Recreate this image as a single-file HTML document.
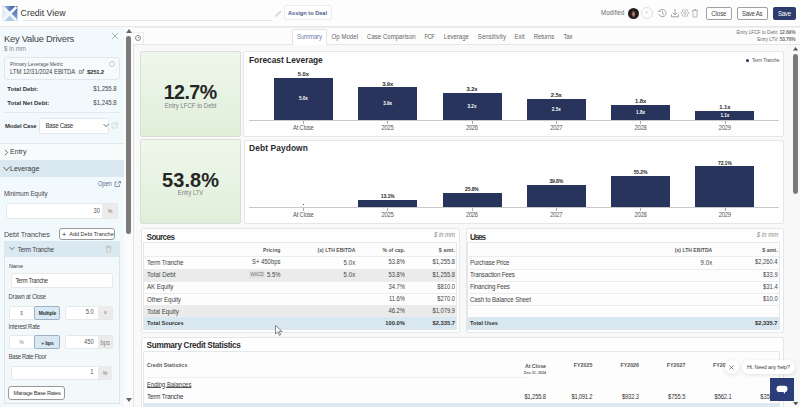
<!DOCTYPE html>
<html><head><meta charset="utf-8"><style>
html,body{margin:0;padding:0;width:800px;height:407px;overflow:hidden;background:#f9f9f9;font-family:'Liberation Sans', sans-serif;}
.a{position:absolute;}
.t{position:absolute;white-space:nowrap;line-height:1;}
.t b,.t.bd{-webkit-text-stroke:0;}
</style></head><body>
<div class="a" style="left:0px;top:0px;width:800px;height:26px;background:#fdfdfd"></div>
<div class="a" style="left:0px;top:26px;width:800px;height:1px;background:#e8e8e8"></div>
<svg class="a" style="left:2.2px;top:5.5px" width="15.4" height="15.4" viewBox="0 0 15 15">
<defs><linearGradient id="lt" x1="0" y1="0" x2="1" y2="0"><stop offset="0" stop-color="#b9d0ea"/><stop offset="0.5" stop-color="#5d82bd"/><stop offset="1" stop-color="#2c4786"/></linearGradient>
<linearGradient id="lr" x1="0" y1="0" x2="0" y2="1"><stop offset="0" stop-color="#3e62a3"/><stop offset="1" stop-color="#8fb2dc"/></linearGradient></defs>
<path d="M0 0 L7.5 7.5 L0 15Z" fill="#e3edf6"/>
<path d="M0 0 L15 0 L7.5 7.5Z" fill="url(#lt)"/>
<path d="M15 0 L15 15 L7.5 7.5Z" fill="url(#lr)"/>
<path d="M0 15 L15 15 L7.5 7.5Z" fill="#b3cde8"/>
<path d="M1 1 L14 14 M14 1 L1 14" stroke="#f4f8fc" stroke-width="2.6"/>
</svg>
<div class="t" style="top:8.78px;font-size:8.8px;color:#333;letter-spacing:0.017px;left:20.6px;">Credit View</div>
<div class="a" style="left:23px;top:20px;width:249px;height:1px;background:#e0e8ee"></div>
<svg class="a" style="left:274px;top:9px" width="9" height="9" viewBox="0 0 9 9"><path d="M1.5 7.5 L7 2" stroke="#cfcfcf" stroke-width="1.4"/></svg>
<div class="a" style="left:283.5px;top:5px;width:48px;height:15px;border:1px solid #e9edf1;border-radius:2px;box-sizing:border-box;background:#fdfdfd"></div>
<div class="t" style="top:10.61px;font-size:5.6px;color:#4d5c8c;font-weight:bold;-webkit-text-stroke:0;letter-spacing:0.008px;left:207.50px;width:200px;text-align:center;">Assign to Deal</div>
<div class="t" style="top:9.90px;font-size:6.1px;color:#6a6a6a;letter-spacing:0.049px;transform:scaleY(1.1);transform-origin:0 5.00px;left:601px;">Modified</div>
<div class="a" style="left:628px;top:7.5px;width:11px;height:11px;border-radius:50%;background:radial-gradient(ellipse 2.2px 3.6px at 50% 55%,#c79a8c 0,#8a5c52 60%,#241c1c 100%)"></div>
<div class="a" style="left:640.5px;top:7px;width:12px;height:12px;border-radius:50%;border:1px solid #e0e0e0;box-sizing:border-box"></div>
<div class="t" style="top:10.07px;font-size:6.5px;color:#cfcfcf;left:546.60px;width:200px;text-align:center;">+</div>
<svg class="a" style="left:657px;top:8px" width="10" height="10" viewBox="0 0 10 10"><path d="M2.2 3.5 A3.6 3.6 0 1 1 2 6" fill="none" stroke="#9a9a9a" stroke-width="0.9"/><path d="M1 2.5 L2.4 4 L3.8 2.6" fill="none" stroke="#9a9a9a" stroke-width="0.9"/><path d="M5.5 3 V5.5 L7 6.5" fill="none" stroke="#9a9a9a" stroke-width="0.9"/></svg>
<svg class="a" style="left:670px;top:8px" width="10" height="10" viewBox="0 0 10 10"><path d="M5 1 V7 M2.8 4.8 L5 7 L7.2 4.8 M1.5 6.5 V8.8 H8.5 V6.5" fill="none" stroke="#9a9a9a" stroke-width="0.9"/></svg>
<svg class="a" style="left:679.8px;top:7.8px" width="10" height="10" viewBox="0 0 10 10"><path d="M8.87 4.49 L8.87 5.51 L7.77 6.15 L7.38 6.83 L7.37 8.09 L6.49 8.60 L5.39 7.97 L4.61 7.97 L3.51 8.60 L2.63 8.09 L2.62 6.83 L2.23 6.15 L1.13 5.51 L1.13 4.49 L2.23 3.85 L2.62 3.17 L2.63 1.91 L3.51 1.40 L4.61 2.03 L5.39 2.03 L6.49 1.40 L7.37 1.91 L7.38 3.17 L7.77 3.85Z" fill="none" stroke="#a8a8a8" stroke-width="0.75" stroke-linejoin="round"/><circle cx="5" cy="5" r="1.3" fill="none" stroke="#a8a8a8" stroke-width="0.75"/></svg>
<svg class="a" style="left:691px;top:8px" width="8" height="10" viewBox="0 0 8 10"><path d="M1 2.5 H7 M3 2.5 V1.5 H5 V2.5 M1.7 2.5 L2.2 9 H5.8 L6.3 2.5" fill="none" stroke="#b0b0b0" stroke-width="0.9"/></svg>
<div class="a" style="left:706px;top:7px;width:25.5px;height:12.5px;border:1px solid #a0a0a0;border-radius:2px;box-sizing:border-box;background:#fff"></div>
<div class="t" style="top:11.00px;font-size:6.1px;color:#444;letter-spacing:-0.099px;transform:scaleY(1.1);transform-origin:0 5.00px;left:618.85px;width:200px;text-align:center;">Close</div>
<div class="a" style="left:737px;top:7px;width:30.7px;height:12.5px;border:1px solid #a0a0a0;border-radius:2px;box-sizing:border-box;background:#fff"></div>
<div class="t" style="top:11.00px;font-size:6.1px;color:#444;letter-spacing:-0.297px;transform:scaleY(1.1);transform-origin:0 5.00px;left:652.15px;width:200px;text-align:center;">Save As</div>
<div class="a" style="left:773px;top:7px;width:22.5px;height:12.5px;border-radius:2px;background:#2d3b6d"></div>
<div class="t" style="top:11.00px;font-size:6.1px;color:#fff;letter-spacing:-0.268px;transform:scaleY(1.1);transform-origin:0 5.00px;left:684.37px;width:200px;text-align:center;">Save</div>
<div class="a" style="left:0px;top:27px;width:124px;height:380px;background:#f2f9fc"></div>
<div class="t" style="top:33.69px;font-size:9.4px;color:#444;letter-spacing:-0.258px;left:4px;">Key Value Drivers</div>
<svg class="a" style="left:111px;top:32px" width="8" height="8" viewBox="0 0 8 8"><path d="M1 1 L7 7 M7 1 L1 7" stroke="#999" stroke-width="0.8"/></svg>
<div class="t" style="top:46.12px;font-size:6.2px;color:#888;transform:scaleY(1.1);transform-origin:0 5.08px;left:4px;">$ in mm</div>
<div class="a" style="left:4px;top:57px;width:116px;height:22.5px;border:1px solid #e0e7ec;border-radius:3px;box-sizing:border-box;background:#f6fafc"></div>
<div class="t" style="top:61.90px;font-size:5.0px;color:#555;letter-spacing:-0.066px;transform:scaleY(1.1);transform-origin:0 4.10px;left:10px;">Primary Leverage Metric</div>
<div class="t" style="top:69.08px;font-size:6.0px;color:#444;letter-spacing:-0.064px;transform:scaleY(1.1);transform-origin:0 4.92px;left:10px;">LTM 12/31/2024 EBITDA</div>
<div class="t" style="top:69.08px;font-size:6.0px;color:#444;font-style:italic;letter-spacing:0.197px;transform:scaleY(1.1);transform-origin:0 4.92px;left:78.5px;">of</div>
<div class="t" style="top:69.08px;font-size:6.0px;color:#333;font-weight:bold;-webkit-text-stroke:0;letter-spacing:-0.23px;left:87px;">$251.2</div>
<div class="a" style="left:109px;top:61px;width:6px;height:6px;border-radius:50%;border:0.8px solid #ccc;box-sizing:border-box"></div>
<div class="t" style="top:86.08px;font-size:6px;color:#333;font-weight:bold;-webkit-text-stroke:0;letter-spacing:-0.028px;left:7.3px;">Total Debt:</div>
<div class="t" style="top:86.08px;font-size:6px;color:#444;transform:scaleY(1.1);transform-origin:0 4.92px;right:683.30px;">$1,255.8</div>
<div class="t" style="top:100.28px;font-size:6px;color:#333;font-weight:bold;-webkit-text-stroke:0;letter-spacing:-0.015px;left:7.3px;">Total Net Debt:</div>
<div class="t" style="top:100.28px;font-size:6px;color:#444;transform:scaleY(1.1);transform-origin:0 4.92px;right:683.30px;">$1,245.8</div>
<div class="a" style="left:4px;top:112px;width:116px;height:1px;background:#e3e9ed"></div>
<div class="t" style="top:123.56px;font-size:5.9px;color:#333;font-weight:bold;-webkit-text-stroke:0;letter-spacing:-0.121px;left:5px;">Model Case</div>
<div class="a" style="left:39.3px;top:117.7px;width:70px;height:16.8px;border:1px solid #e3e8ec;border-radius:2px;box-sizing:border-box;background:#fff"></div>
<div class="t" style="top:123.32px;font-size:6.2px;color:#333;letter-spacing:-0.328px;transform:scaleY(1.1);transform-origin:0 5.08px;left:45.5px;">Base Case</div>
<svg class="a" style="left:102.5px;top:123px" width="6" height="5" viewBox="0 0 6 5"><path d="M0.6 1.2 L3 3.6 L5.4 1.2" fill="none" stroke="#444" stroke-width="0.8"/></svg>
<svg class="a" style="left:111px;top:121px" width="8" height="8" viewBox="0 0 8 8"><rect x="1" y="2" width="5" height="5" fill="none" stroke="#ccc" stroke-width="0.7"/><path d="M3 5 L7 1" stroke="#ccc" stroke-width="0.8"/></svg>
<div class="a" style="left:0px;top:143px;width:124px;height:1px;background:#e3e9ed"></div>
<div class="a" style="left:0px;top:144px;width:124px;height:15.5px;background:#f8fbfc"></div>
<svg class="a" style="left:4px;top:148.5px" width="5" height="7" viewBox="0 0 5 7"><path d="M1 0.8 L3.6 3.5 L1 6.2" fill="none" stroke="#444" stroke-width="0.8"/></svg>
<div class="t" style="top:149.38px;font-size:7.1px;color:#3a3a3a;letter-spacing:-0.018px;transform:scaleY(1.1);transform-origin:0 5.82px;left:10px;">Entry</div>
<div class="a" style="left:0px;top:159.5px;width:124px;height:1px;background:#e3e9ed"></div>
<div class="a" style="left:0px;top:160.4px;width:124px;height:16.2px;background:#d9e8f1"></div>
<svg class="a" style="left:3.3px;top:165.5px" width="7" height="6" viewBox="0 0 7 6"><path d="M0.6 1 L3.5 4.6 L6.4 1" fill="none" stroke="#444" stroke-width="0.8"/></svg>
<div class="t" style="top:165.98px;font-size:7.1px;color:#3a3a3a;letter-spacing:-0.029px;transform:scaleY(1.1);transform-origin:0 5.82px;left:10px;">Leverage</div>
<div class="t" style="top:181.74px;font-size:5.8px;color:#5b6b8e;letter-spacing:-0.162px;transform:scaleY(1.1);transform-origin:0 4.76px;left:98px;">Open</div>
<svg class="a" style="left:113.5px;top:181px" width="7" height="6" viewBox="0 0 7 6"><path d="M3 1 H1 V5.5 H5.5 V3.5 M3.5 3 L6.5 0.5 M4.5 0.5 H6.5 V2.5" fill="none" stroke="#5b6b8e" stroke-width="0.7"/></svg>
<div class="t" style="top:190.82px;font-size:6.2px;color:#444;letter-spacing:-0.038px;transform:scaleY(1.1);transform-origin:0 5.08px;left:4px;">Minimum Equity</div>
<div class="a" style="left:5.5px;top:203px;width:112.2px;height:15.5px;border:1px solid #e6e9ec;border-radius:2px;box-sizing:border-box;background:#fff"></div>
<div class="a" style="left:102.2px;top:203.5px;width:15px;height:14.5px;background:#ebebeb"></div>
<div class="t" style="top:209.14px;font-size:5.8px;color:#555;transform:scaleY(1.1);transform-origin:0 4.76px;right:700.00px;">30</div>
<div class="t" style="top:208.94px;font-size:5.2px;color:#777;transform:scaleY(1.1);transform-origin:0 4.26px;left:10.00px;width:200px;text-align:center;">%</div>
<div class="t" style="top:231.00px;font-size:7.2px;color:#4a4a4a;letter-spacing:-0.077px;transform:scaleY(1.1);transform-origin:0 5.90px;left:4px;">Debt Tranches</div>
<div class="a" style="left:58.7px;top:227.5px;width:56.5px;height:12.2px;border:1px solid #9a9a9a;border-radius:3px;box-sizing:border-box;background:#fff"></div>
<div class="t" style="top:231.65px;font-size:5.55px;color:#333;letter-spacing:-0.009px;transform:scaleY(1.1);transform-origin:0 4.55px;left:69.2px;">Add Debt Tranche</div>
<div class="t" style="top:231.04px;font-size:8px;color:#444;left:-35.80px;width:200px;text-align:center;">+</div>
<div class="a" style="left:4px;top:240.7px;width:115.7px;height:163.8px;border:1px solid #dbe4ea;box-sizing:border-box;background:#f3f8fb"></div>
<div class="a" style="left:4px;top:240.5px;width:115.7px;height:16.8px;background:#dae8f1"></div>
<svg class="a" style="left:8.5px;top:246px" width="6" height="5" viewBox="0 0 6 5"><path d="M0.6 1.2 L3 3.6 L5.4 1.2" fill="none" stroke="#555" stroke-width="0.8"/></svg>
<div class="t" style="top:246.83px;font-size:6.3px;color:#444;letter-spacing:-0.192px;transform:scaleY(1.1);transform-origin:0 5.17px;left:17.7px;">Term Tranche</div>
<svg class="a" style="left:105.3px;top:244.8px" width="7" height="8" viewBox="0 0 7 8"><path d="M0.6 1.8 H6.4 M2.5 1.8 V0.8 H4.5 V1.8" fill="none" stroke="#c2c2c2" stroke-width="0.8"/><path d="M1.3 2.3 L1.7 7.3 Q1.8 7.6 2.1 7.6 H4.9 Q5.2 7.6 5.3 7.3 L5.7 2.3 Z" fill="#d8dcdf" stroke="#c2c2c2" stroke-width="0.7"/><path d="M2.8 3.3 V6.6 M4.2 3.3 V6.6" stroke="#eef2f4" stroke-width="0.5"/></svg>
<div class="t" style="top:263.61px;font-size:5.6px;color:#444;letter-spacing:-0.279px;transform:scaleY(1.1);transform-origin:0 4.59px;left:9px;">Name</div>
<div class="a" style="left:10.8px;top:273.4px;width:102px;height:15px;border:1px solid #e6e9ec;border-radius:2px;box-sizing:border-box;background:#fff"></div>
<div class="t" style="top:278.84px;font-size:5.8px;color:#333;letter-spacing:-0.259px;transform:scaleY(1.1);transform-origin:0 4.76px;left:15.4px;">Term Tranche</div>
<div class="t" style="top:294.94px;font-size:5.8px;color:#444;letter-spacing:-0.165px;transform:scaleY(1.1);transform-origin:0 4.76px;left:8.6px;">Drawn at Close</div>
<div class="a" style="left:8.6px;top:305.5px;width:26px;height:14.1px;border:1px solid #e6e9ec;border-right:none;box-sizing:border-box;background:#fff;border-radius:2px 0 0 2px"></div>
<div class="a" style="left:34.2px;top:305.5px;width:26.3px;height:14.1px;border:1px solid #9db3c4;box-sizing:border-box;background:#d9e9f3;border-radius:2px"></div>
<div class="t" style="top:310.57px;font-size:5.4px;color:#888;transform:scaleY(1.1);transform-origin:0 4.43px;left:-78.50px;width:200px;text-align:center;">$</div>
<div class="t" style="top:310.90px;font-size:5.0px;color:#333;font-weight:bold;-webkit-text-stroke:0;letter-spacing:-0.169px;left:-52.58px;width:200px;text-align:center;">Multiple</div>
<div class="a" style="left:65.3px;top:305.5px;width:47.3px;height:14.1px;border:1px solid #e6e9ec;border-radius:2px;box-sizing:border-box;background:#fff"></div>
<div class="a" style="left:98.4px;top:306px;width:13.8px;height:13.1px;background:#ebebeb"></div>
<div class="t" style="top:310.24px;font-size:5.8px;color:#555;transform:scaleY(1.1);transform-origin:0 4.76px;right:706.30px;">5.0</div>
<div class="t" style="top:310.49px;font-size:5.5px;color:#777;transform:scaleY(1.1);transform-origin:0 4.51px;left:5.30px;width:200px;text-align:center;">x</div>
<div class="t" style="top:325.04px;font-size:5.8px;color:#444;letter-spacing:-0.159px;transform:scaleY(1.1);transform-origin:0 4.76px;left:8.6px;">Interest Rate</div>
<div class="a" style="left:8.6px;top:335px;width:26px;height:14.3px;border:1px solid #e6e9ec;border-right:none;box-sizing:border-box;background:#fff;border-radius:2px 0 0 2px"></div>
<div class="a" style="left:34.2px;top:335px;width:26.3px;height:14.3px;border:1px solid #9db3c4;box-sizing:border-box;background:#d9e9f3;border-radius:2px"></div>
<div class="t" style="top:340.24px;font-size:5.2px;color:#888;transform:scaleY(1.1);transform-origin:0 4.26px;left:-78.50px;width:200px;text-align:center;">%</div>
<div class="t" style="top:340.50px;font-size:5.0px;color:#333;font-weight:bold;-webkit-text-stroke:0;letter-spacing:-0.199px;left:-52.60px;width:200px;text-align:center;">+ bps</div>
<div class="a" style="left:65.3px;top:335px;width:47.3px;height:14.3px;border:1px solid #e6e9ec;border-radius:2px;box-sizing:border-box;background:#fff"></div>
<div class="a" style="left:98.4px;top:335.5px;width:13.8px;height:13.3px;background:#ebebeb"></div>
<div class="t" style="top:339.74px;font-size:5.8px;color:#555;transform:scaleY(1.1);transform-origin:0 4.76px;right:706.30px;">450</div>
<div class="t" style="top:339.88px;font-size:6.0px;color:#888;letter-spacing:-0.137px;transform:scaleY(1.1);transform-origin:0 4.92px;left:5.23px;width:200px;text-align:center;">bps</div>
<div class="t" style="top:355.14px;font-size:5.8px;color:#444;letter-spacing:-0.308px;transform:scaleY(1.1);transform-origin:0 4.76px;left:8.8px;">Base Rate Floor</div>
<div class="a" style="left:11px;top:365.6px;width:101.2px;height:14px;border:1px solid #e6e9ec;border-radius:2px;box-sizing:border-box;background:#fff"></div>
<div class="a" style="left:97.9px;top:366px;width:14px;height:13.2px;background:#ebebeb"></div>
<div class="t" style="top:370.24px;font-size:5.8px;color:#555;transform:scaleY(1.1);transform-origin:0 4.76px;right:706.50px;">1</div>
<div class="t" style="top:370.74px;font-size:5.2px;color:#777;transform:scaleY(1.1);transform-origin:0 4.26px;left:5.00px;width:200px;text-align:center;">%</div>
<div class="a" style="left:8.4px;top:386.3px;width:57.1px;height:14px;border:1px solid #999;border-radius:3px;box-sizing:border-box;background:#fff"></div>
<div class="t" style="top:391.01px;font-size:5.6px;color:#333;letter-spacing:-0.221px;transform:scaleY(1.1);transform-origin:0 4.59px;left:-63.01px;width:200px;text-align:center;">Manage Base Rates</div>
<div class="a" style="left:124px;top:27px;width:9px;height:380px;background:#fbfbfb"></div>
<svg class="a" style="left:125.5px;top:29px" width="6" height="4" viewBox="0 0 6 4"><path d="M0 4 L3 0 L6 4Z" fill="#666"/></svg>
<div class="a" style="left:126px;top:36.4px;width:4.6px;height:197.3px;background:#7b7b7b;border-radius:2.3px"></div>
<svg class="a" style="left:125.5px;top:398px" width="6" height="4" viewBox="0 0 6 4"><path d="M0 0 L3 4 L6 0Z" fill="#666"/></svg>
<div class="a" style="left:132.5px;top:44px;width:1px;height:363px;background:#e4e4e4"></div>
<div class="a" style="left:134px;top:27px;width:666px;height:380px;background:#f9f9f9"></div>
<div class="a" style="left:132.5px;top:27px;width:667.5px;height:17px;background:#fcfcfc"></div>
<div class="a" style="left:132.5px;top:27.3px;width:667.5px;height:0.8px;background:#eeeeee"></div>
<div class="a" style="left:132.5px;top:43.6px;width:667.5px;height:1px;background:#e6e6e6"></div>
<div class="a" style="left:132.4px;top:31.8px;width:11.6px;height:12px;background:#fdfdfd;border-right:1px solid #e6e6e6;border-top:1px solid #ececec;box-sizing:border-box"></div>
<div class="a" style="left:135px;top:34.5px;width:6.2px;height:6.2px;border-radius:50%;border:0.9px solid #8a8a8a;box-sizing:border-box"></div>
<div class="a" style="left:137.5px;top:37px;width:1.2px;height:1.2px;background:#777"></div>
<div class="a" style="left:292.3px;top:29.3px;width:35.2px;height:15.7px;background:#fff;border:1px solid #e3e3e3;border-bottom:none;box-sizing:border-box;border-radius:2px 2px 0 0"></div>
<div class="t" style="top:34.38px;font-size:6.0px;color:#6a7db0;letter-spacing:-0.111px;transform:scaleY(1.1);transform-origin:0 4.92px;left:297px;">Summary</div>
<div class="t" style="top:34.38px;font-size:6.0px;color:#666;letter-spacing:0.07px;transform:scaleY(1.1);transform-origin:0 4.92px;left:331.5px;">Op Model</div>
<div class="t" style="top:34.38px;font-size:6.0px;color:#666;letter-spacing:0.042px;transform:scaleY(1.1);transform-origin:0 4.92px;left:367px;">Case Comparison</div>
<div class="t" style="top:34.38px;font-size:6.0px;color:#666;letter-spacing:-0.581px;transform:scaleY(1.1);transform-origin:0 4.92px;left:424.5px;">FCF</div>
<div class="t" style="top:34.38px;font-size:6.0px;color:#666;letter-spacing:0.012px;transform:scaleY(1.1);transform-origin:0 4.92px;left:443.8px;">Leverage</div>
<div class="t" style="top:34.38px;font-size:6.0px;color:#666;letter-spacing:0.109px;transform:scaleY(1.1);transform-origin:0 4.92px;left:477.8px;">Sensitivity</div>
<div class="t" style="top:34.38px;font-size:6.0px;color:#666;letter-spacing:-0.001px;transform:scaleY(1.1);transform-origin:0 4.92px;left:514.6px;">Exit</div>
<div class="t" style="top:34.38px;font-size:6.0px;color:#666;letter-spacing:-0.068px;transform:scaleY(1.1);transform-origin:0 4.92px;left:533.7px;">Returns</div>
<div class="t" style="top:34.38px;font-size:6.0px;color:#666;letter-spacing:-0.168px;transform:scaleY(1.1);transform-origin:0 4.92px;left:563.4px;">Tax</div>
<div class="t" style="top:30.58px;font-size:4.9px;color:#707070;letter-spacing:-0.09px;transform:scaleY(1.1);transform-origin:0 4.02px;right:4.49px;">Entry LFCF to Debt: <b>12.69%</b></div>
<div class="t" style="top:37.58px;font-size:4.9px;color:#707070;letter-spacing:-0.13px;transform:scaleY(1.1);transform-origin:0 4.02px;right:4.53px;">Entry LTV: <b>53.76%</b></div>
<div class="a" style="left:792px;top:45px;width:8px;height:362px;background:#f8f8f8"></div>
<svg class="a" style="left:793.1px;top:47px" width="5.2" height="3.7" viewBox="0 0 6 4"><path d="M0 4 L3 0 L6 4Z" fill="#555"/></svg>
<div class="a" style="left:793.3px;top:54.4px;width:4.8px;height:139.6px;background:#787878;border-radius:2.4px"></div>
<svg class="a" style="left:793px;top:401.5px" width="5.5" height="3.5" viewBox="0 0 6 4"><path d="M0 0 L3 4 L6 0Z" fill="#555"/></svg>
<div class="a" style="left:140px;top:51.4px;width:101px;height:85.6px;background:linear-gradient(#eef7eb,#e0efda);border:1px solid #d9dfd8;box-sizing:border-box;border-radius:2px"></div>
<div class="t" style="top:83.03px;font-size:19.6px;color:#262626;font-weight:bold;-webkit-text-stroke:0;letter-spacing:-0.55px;left:90.12px;width:200px;text-align:center;">12.7%</div>
<div class="t" style="top:103.28px;font-size:6.0px;color:#808080;transform:scaleY(1.1);transform-origin:0 4.92px;left:90.70px;width:200px;text-align:center;">Entry LFCF to Debt</div>
<div class="a" style="left:140px;top:139.3px;width:101px;height:85.1px;background:linear-gradient(#eef7eb,#e0efda);border:1px solid #d9dfd8;box-sizing:border-box;border-radius:2px"></div>
<div class="t" style="top:170.10px;font-size:20px;color:#262626;font-weight:bold;-webkit-text-stroke:0;letter-spacing:0.1px;left:90.55px;width:200px;text-align:center;">53.8%</div>
<div class="t" style="top:191.34px;font-size:5.8px;color:#808080;transform:scaleY(1.1);transform-origin:0 4.76px;left:90.50px;width:200px;text-align:center;">Entry LTV</div>
<div class="a" style="left:243.2px;top:51.4px;width:540.5px;height:85.2px;background:#fefefe;border:1px solid #e3e7e9;box-sizing:border-box;border-radius:2px"></div>
<div class="t" style="top:55.91px;font-size:8.4px;color:#2a2a2a;font-weight:bold;-webkit-text-stroke:0;letter-spacing:-0.015px;left:249px;">Forecast Leverage</div>
<div class="a" style="left:745.9px;top:59px;width:3px;height:3px;border-radius:50%;background:#28345b"></div>
<div class="t" style="top:59.13px;font-size:4.6px;color:#555;letter-spacing:-0.065px;transform:scaleY(1.1);transform-origin:0 3.77px;left:752.1px;">Term Tranche</div>
<div class="a" style="left:249px;top:119.5px;width:530.3px;height:1px;background:#c8c8c8"></div>
<div class="a" style="left:273.9px;top:78.1px;width:59px;height:41.900000000000006px;background:#28345b"></div>
<div class="t" style="top:72.34px;font-size:5.8px;color:#2a2a2a;font-weight:bold;-webkit-text-stroke:0;letter-spacing:-0.062px;left:203.37px;width:200px;text-align:center;">5.0x</div>
<div class="t" style="top:97.18px;font-size:4.6px;color:#fff;font-weight:bold;-webkit-text-stroke:0;left:203.40px;width:200px;text-align:center;">5.0x</div>
<div class="t" style="top:125.84px;font-size:5.8px;color:#555;letter-spacing:-0.146px;transform:scaleY(1.1);transform-origin:0 4.76px;left:203.33px;width:200px;text-align:center;">At Close</div>
<div class="a" style="left:303.04999999999995px;top:120.5px;width:0.7px;height:3px;background:#aaa"></div>
<div class="a" style="left:358.2px;top:87.318px;width:59px;height:32.682px;background:#28345b"></div>
<div class="t" style="top:81.56px;font-size:5.8px;color:#2a2a2a;font-weight:bold;-webkit-text-stroke:0;letter-spacing:-0.062px;left:287.67px;width:200px;text-align:center;">3.9x</div>
<div class="t" style="top:101.79px;font-size:4.6px;color:#fff;font-weight:bold;-webkit-text-stroke:0;left:287.70px;width:200px;text-align:center;">3.9x</div>
<div class="t" style="top:125.84px;font-size:5.8px;color:#555;letter-spacing:-0.234px;transform:scaleY(1.1);transform-origin:0 4.76px;left:287.58px;width:200px;text-align:center;">2025</div>
<div class="a" style="left:387.34999999999997px;top:120.5px;width:0.7px;height:3px;background:#aaa"></div>
<div class="a" style="left:442.5px;top:93.184px;width:59px;height:26.816000000000003px;background:#28345b"></div>
<div class="t" style="top:87.43px;font-size:5.8px;color:#2a2a2a;font-weight:bold;-webkit-text-stroke:0;letter-spacing:-0.062px;left:371.97px;width:200px;text-align:center;">3.2x</div>
<div class="t" style="top:104.72px;font-size:4.6px;color:#fff;font-weight:bold;-webkit-text-stroke:0;left:372.00px;width:200px;text-align:center;">3.2x</div>
<div class="t" style="top:125.84px;font-size:5.8px;color:#555;letter-spacing:-0.234px;transform:scaleY(1.1);transform-origin:0 4.76px;left:371.88px;width:200px;text-align:center;">2026</div>
<div class="a" style="left:471.65px;top:120.5px;width:0.7px;height:3px;background:#aaa"></div>
<div class="a" style="left:526.8px;top:99.05px;width:59px;height:20.950000000000003px;background:#28345b"></div>
<div class="t" style="top:93.29px;font-size:5.8px;color:#2a2a2a;font-weight:bold;-webkit-text-stroke:0;letter-spacing:-0.062px;left:456.27px;width:200px;text-align:center;">2.5x</div>
<div class="t" style="top:107.65px;font-size:4.6px;color:#fff;font-weight:bold;-webkit-text-stroke:0;left:456.30px;width:200px;text-align:center;">2.5x</div>
<div class="t" style="top:125.84px;font-size:5.8px;color:#555;letter-spacing:-0.234px;transform:scaleY(1.1);transform-origin:0 4.76px;left:456.18px;width:200px;text-align:center;">2027</div>
<div class="a" style="left:555.9499999999999px;top:120.5px;width:0.7px;height:3px;background:#aaa"></div>
<div class="a" style="left:611.0999999999999px;top:104.916px;width:59px;height:15.084000000000001px;background:#28345b"></div>
<div class="t" style="top:99.16px;font-size:5.8px;color:#2a2a2a;font-weight:bold;-webkit-text-stroke:0;letter-spacing:-0.062px;left:540.57px;width:200px;text-align:center;">1.8x</div>
<div class="t" style="top:110.59px;font-size:4.6px;color:#fff;font-weight:bold;-webkit-text-stroke:0;left:540.60px;width:200px;text-align:center;">1.8x</div>
<div class="t" style="top:125.84px;font-size:5.8px;color:#555;letter-spacing:-0.234px;transform:scaleY(1.1);transform-origin:0 4.76px;left:540.48px;width:200px;text-align:center;">2028</div>
<div class="a" style="left:640.2499999999999px;top:120.5px;width:0.7px;height:3px;background:#aaa"></div>
<div class="a" style="left:695.4px;top:110.782px;width:59px;height:9.218000000000002px;background:#28345b"></div>
<div class="t" style="top:105.03px;font-size:5.8px;color:#2a2a2a;font-weight:bold;-webkit-text-stroke:0;letter-spacing:-0.062px;left:624.87px;width:200px;text-align:center;">1.1x</div>
<div class="t" style="top:113.52px;font-size:4.6px;color:#fff;font-weight:bold;-webkit-text-stroke:0;left:624.90px;width:200px;text-align:center;">1.1x</div>
<div class="t" style="top:125.84px;font-size:5.8px;color:#555;letter-spacing:-0.234px;transform:scaleY(1.1);transform-origin:0 4.76px;left:624.78px;width:200px;text-align:center;">2029</div>
<div class="a" style="left:724.55px;top:120.5px;width:0.7px;height:3px;background:#aaa"></div>
<div class="a" style="left:243.8px;top:139.6px;width:540px;height:84.4px;background:#fefefe;border:1px solid #e3e7e9;box-sizing:border-box;border-radius:2px"></div>
<div class="t" style="top:144.31px;font-size:8.4px;color:#2a2a2a;font-weight:bold;-webkit-text-stroke:0;letter-spacing:0.103px;left:249px;">Debt Paydown</div>
<div class="a" style="left:249px;top:207px;width:530.3px;height:1px;background:#c8c8c8"></div>
<div class="a" style="left:302.9px;top:203.5px;width:1px;height:1px;background:#555"></div>
<div class="t" style="top:213.44px;font-size:5.8px;color:#555;letter-spacing:-0.146px;transform:scaleY(1.1);transform-origin:0 4.76px;left:203.33px;width:200px;text-align:center;">At Close</div>
<div class="a" style="left:303.04999999999995px;top:208px;width:0.7px;height:3px;background:#aaa"></div>
<div class="a" style="left:358.2px;top:199.9937px;width:59px;height:7.5062999999999995px;background:#28345b"></div>
<div class="t" style="top:194.41px;font-size:5.1px;color:#2a2a2a;font-weight:bold;-webkit-text-stroke:0;letter-spacing:-0.165px;left:287.62px;width:200px;text-align:center;">13.1%</div>
<div class="t" style="top:213.44px;font-size:5.8px;color:#555;letter-spacing:-0.234px;transform:scaleY(1.1);transform-origin:0 4.76px;left:287.58px;width:200px;text-align:center;">2025</div>
<div class="a" style="left:387.34999999999997px;top:208px;width:0.7px;height:3px;background:#aaa"></div>
<div class="a" style="left:442.5px;top:192.7166px;width:59px;height:14.783399999999999px;background:#28345b"></div>
<div class="t" style="top:187.13px;font-size:5.1px;color:#2a2a2a;font-weight:bold;-webkit-text-stroke:0;letter-spacing:-0.165px;left:371.92px;width:200px;text-align:center;">25.8%</div>
<div class="t" style="top:213.44px;font-size:5.8px;color:#555;letter-spacing:-0.234px;transform:scaleY(1.1);transform-origin:0 4.76px;left:371.88px;width:200px;text-align:center;">2026</div>
<div class="a" style="left:471.65px;top:208px;width:0.7px;height:3px;background:#aaa"></div>
<div class="a" style="left:526.8px;top:184.6946px;width:59px;height:22.805399999999995px;background:#28345b"></div>
<div class="t" style="top:179.11px;font-size:5.1px;color:#2a2a2a;font-weight:bold;-webkit-text-stroke:0;letter-spacing:-0.165px;left:456.22px;width:200px;text-align:center;">39.8%</div>
<div class="t" style="top:213.44px;font-size:5.8px;color:#555;letter-spacing:-0.234px;transform:scaleY(1.1);transform-origin:0 4.76px;left:456.18px;width:200px;text-align:center;">2027</div>
<div class="a" style="left:555.9499999999999px;top:208px;width:0.7px;height:3px;background:#aaa"></div>
<div class="a" style="left:611.0999999999999px;top:175.8704px;width:59px;height:31.6296px;background:#28345b"></div>
<div class="t" style="top:170.29px;font-size:5.1px;color:#2a2a2a;font-weight:bold;-webkit-text-stroke:0;letter-spacing:-0.165px;left:540.52px;width:200px;text-align:center;">55.2%</div>
<div class="t" style="top:213.44px;font-size:5.8px;color:#555;letter-spacing:-0.234px;transform:scaleY(1.1);transform-origin:0 4.76px;left:540.48px;width:200px;text-align:center;">2028</div>
<div class="a" style="left:640.2499999999999px;top:208px;width:0.7px;height:3px;background:#aaa"></div>
<div class="a" style="left:695.4px;top:166.1867px;width:59px;height:41.31329999999999px;background:#28345b"></div>
<div class="t" style="top:160.60px;font-size:5.1px;color:#2a2a2a;font-weight:bold;-webkit-text-stroke:0;letter-spacing:-0.165px;left:624.82px;width:200px;text-align:center;">72.1%</div>
<div class="t" style="top:213.44px;font-size:5.8px;color:#555;letter-spacing:-0.234px;transform:scaleY(1.1);transform-origin:0 4.76px;left:624.78px;width:200px;text-align:center;">2029</div>
<div class="a" style="left:724.55px;top:208px;width:0.7px;height:3px;background:#aaa"></div>
<div class="a" style="left:140.6px;top:227.6px;width:319.4px;height:105.4px;background:#fefefe;border:1px solid #e3e7e9;box-sizing:border-box;border-radius:2px"></div>
<div class="t" style="top:233.78px;font-size:8.2px;color:#333;font-weight:bold;-webkit-text-stroke:0;letter-spacing:-0.66px;left:146.6px;">Sources</div>
<div class="t" style="top:232.28px;font-size:6.0px;color:#888;font-style:italic;letter-spacing:-0.056px;transform:scaleY(1.1);transform-origin:0 4.92px;right:345.06px;">$ in mm</div>
<div class="a" style="left:143.4px;top:242px;width:313.9px;height:88px;border:1px solid #e3e8eb;box-sizing:border-box;background:#fdfdfd"></div>
<div class="a" style="left:143.4px;top:256px;width:313.9px;height:1px;background:#ebeef0"></div>
<div class="a" style="left:143.4px;top:268.8px;width:313.9px;height:1px;background:#ebeef0"></div>
<div class="a" style="left:143.4px;top:281.2px;width:313.9px;height:1px;background:#ebeef0"></div>
<div class="a" style="left:143.4px;top:293.3px;width:313.9px;height:1px;background:#ebeef0"></div>
<div class="a" style="left:143.4px;top:305.2px;width:313.9px;height:1px;background:#ebeef0"></div>
<div class="a" style="left:143.4px;top:317.2px;width:313.9px;height:1px;background:#ebeef0"></div>
<div class="a" style="left:144.4px;top:269px;width:312px;height:12.4px;background:#ebebeb"></div>
<div class="a" style="left:144.4px;top:305px;width:312px;height:12.4px;background:#ebebeb"></div>
<div class="a" style="left:144.4px;top:317.4px;width:312px;height:12px;background:#d9e8f0"></div>
<div class="t" style="top:247.82px;font-size:5.1px;color:#555;font-weight:bold;-webkit-text-stroke:0;letter-spacing:0.019px;right:519.58px;">Pricing</div>
<div class="t" style="top:247.82px;font-size:5.1px;color:#555;font-weight:bold;-webkit-text-stroke:0;letter-spacing:0.017px;right:444.68px;">(x) LTH EBITDA</div>
<div class="t" style="top:247.82px;font-size:5.1px;color:#555;font-weight:bold;-webkit-text-stroke:0;letter-spacing:0.027px;right:394.97px;">% of cap.</div>
<div class="t" style="top:247.65px;font-size:5.3px;color:#555;font-weight:bold;-webkit-text-stroke:0;letter-spacing:0.197px;right:344.80px;">$ amt.</div>
<div class="t" style="top:259.92px;font-size:6.2px;color:#444;letter-spacing:-0.118px;transform:scaleY(1.1);transform-origin:0 5.08px;left:147px;">Term Tranche</div>
<div class="t" style="top:260.16px;font-size:5.9px;color:#444;transform:scaleY(1.1);transform-origin:0 4.84px;right:519.60px;">S+ 450bps</div>
<div class="t" style="top:260.08px;font-size:6.0px;color:#444;letter-spacing:0.12px;transform:scaleY(1.1);transform-origin:0 4.92px;right:444.58px;">5.0x</div>
<div class="t" style="top:260.24px;font-size:5.8px;color:#444;transform:scaleY(1.1);transform-origin:0 4.76px;right:395.00px;">53.8%</div>
<div class="t" style="top:260.24px;font-size:5.8px;color:#444;transform:scaleY(1.1);transform-origin:0 4.76px;right:345.00px;">$1,255.8</div>
<div class="t" style="top:272.32px;font-size:6.2px;color:#444;letter-spacing:0.065px;transform:scaleY(1.1);transform-origin:0 5.08px;left:147px;">Total Debt</div>
<div class="t" style="top:272.56px;font-size:5.9px;color:#444;transform:scaleY(1.1);transform-origin:0 4.84px;right:519.60px;">5.5%</div>
<div class="t" style="top:272.48px;font-size:6.0px;color:#444;letter-spacing:0.12px;transform:scaleY(1.1);transform-origin:0 4.92px;right:444.58px;">5.0x</div>
<div class="t" style="top:272.64px;font-size:5.8px;color:#444;transform:scaleY(1.1);transform-origin:0 4.76px;right:395.00px;">53.8%</div>
<div class="t" style="top:272.64px;font-size:5.8px;color:#444;transform:scaleY(1.1);transform-origin:0 4.76px;right:345.00px;">$1,255.8</div>
<div class="t" style="top:284.32px;font-size:6.2px;color:#444;letter-spacing:-0.103px;transform:scaleY(1.1);transform-origin:0 5.08px;left:147px;">AK Equity</div>
<div class="t" style="top:284.64px;font-size:5.8px;color:#444;transform:scaleY(1.1);transform-origin:0 4.76px;right:395.00px;">34.7%</div>
<div class="t" style="top:284.64px;font-size:5.8px;color:#444;transform:scaleY(1.1);transform-origin:0 4.76px;right:345.00px;">$810.0</div>
<div class="t" style="top:296.82px;font-size:6.2px;color:#444;letter-spacing:-0.042px;transform:scaleY(1.1);transform-origin:0 5.08px;left:147px;">Other Equity</div>
<div class="t" style="top:297.14px;font-size:5.8px;color:#444;transform:scaleY(1.1);transform-origin:0 4.76px;right:395.00px;">11.6%</div>
<div class="t" style="top:297.14px;font-size:5.8px;color:#444;transform:scaleY(1.1);transform-origin:0 4.76px;right:345.00px;">$270.0</div>
<div class="t" style="top:308.52px;font-size:6.2px;color:#444;letter-spacing:-0.023px;transform:scaleY(1.1);transform-origin:0 5.08px;left:147px;">Total Equity</div>
<div class="t" style="top:308.84px;font-size:5.8px;color:#444;transform:scaleY(1.1);transform-origin:0 4.76px;right:395.00px;">46.2%</div>
<div class="t" style="top:308.84px;font-size:5.8px;color:#444;transform:scaleY(1.1);transform-origin:0 4.76px;right:345.00px;">$1,079.9</div>
<div class="t" style="top:321.01px;font-size:5.6px;color:#333;font-weight:bold;-webkit-text-stroke:0;left:147px;">Total Sources</div>
<div class="t" style="top:320.84px;font-size:5.8px;color:#333;font-weight:bold;-webkit-text-stroke:0;right:395.00px;">100.0%</div>
<div class="t" style="top:320.84px;font-size:5.8px;color:#333;font-weight:bold;-webkit-text-stroke:0;right:345.00px;">$2,335.7</div>
<div class="a" style="left:248.8px;top:271px;width:16.6px;height:7.4px;background:#e0e0e0;border-radius:1px"></div>
<div class="t" style="top:272.79px;font-size:4.4px;color:#777;transform:scaleY(1.1);transform-origin:0 3.61px;left:157.10px;width:200px;text-align:center;">WACD</div>
<svg class="a" style="left:274.5px;top:324.5px" width="9" height="11" viewBox="0 0 9 11"><path d="M0.5 0.5 L0.5 9 L2.7 7 L4.3 10.3 L5.6 9.7 L4.1 6.5 L7.2 6.5 Z" fill="#fff" stroke="#555" stroke-width="0.7"/></svg>
<div class="a" style="left:465.5px;top:227.6px;width:318.5px;height:105.4px;background:#fefefe;border:1px solid #e3e7e9;box-sizing:border-box;border-radius:2px"></div>
<div class="t" style="top:233.78px;font-size:8.2px;color:#333;font-weight:bold;-webkit-text-stroke:0;letter-spacing:-1.201px;left:470px;">Uses</div>
<div class="t" style="top:232.28px;font-size:6.0px;color:#888;font-style:italic;letter-spacing:0.044px;transform:scaleY(1.1);transform-origin:0 4.92px;right:21.66px;">$ in mm</div>
<div class="a" style="left:466.6px;top:242px;width:313.8px;height:88px;border:1px solid #e3e8eb;box-sizing:border-box;background:#fdfdfd"></div>
<div class="a" style="left:466.6px;top:256px;width:313.8px;height:1px;background:#ebeef0"></div>
<div class="a" style="left:466.6px;top:268.8px;width:313.8px;height:1px;background:#ebeef0"></div>
<div class="a" style="left:466.6px;top:281.2px;width:313.8px;height:1px;background:#ebeef0"></div>
<div class="a" style="left:466.6px;top:293.3px;width:313.8px;height:1px;background:#ebeef0"></div>
<div class="a" style="left:466.6px;top:305.2px;width:313.8px;height:1px;background:#ebeef0"></div>
<div class="a" style="left:466.6px;top:317.2px;width:313.8px;height:1px;background:#ebeef0"></div>
<div class="a" style="left:467.6px;top:317.4px;width:312px;height:12px;background:#d9e8f0"></div>
<div class="t" style="top:247.82px;font-size:5.1px;color:#555;font-weight:bold;-webkit-text-stroke:0;letter-spacing:0.001px;right:87.70px;">(x) LTH EBITDA</div>
<div class="t" style="top:247.65px;font-size:5.3px;color:#555;font-weight:bold;-webkit-text-stroke:0;letter-spacing:-0.003px;right:22.40px;">$ amt.</div>
<div class="t" style="top:259.92px;font-size:6.2px;color:#444;letter-spacing:-0.188px;transform:scaleY(1.1);transform-origin:0 5.08px;left:470px;">Purchase Price</div>
<div class="t" style="top:260.08px;font-size:6.0px;color:#444;letter-spacing:0.12px;transform:scaleY(1.1);transform-origin:0 4.92px;right:87.58px;">9.0x</div>
<div class="t" style="top:260.24px;font-size:5.8px;color:#444;transform:scaleY(1.1);transform-origin:0 4.76px;right:22.40px;">$2,260.4</div>
<div class="t" style="top:272.32px;font-size:6.2px;color:#444;letter-spacing:-0.178px;transform:scaleY(1.1);transform-origin:0 5.08px;left:470px;">Transaction Fees</div>
<div class="t" style="top:272.64px;font-size:5.8px;color:#444;transform:scaleY(1.1);transform-origin:0 4.76px;right:22.40px;">$33.9</div>
<div class="t" style="top:284.32px;font-size:6.2px;color:#444;letter-spacing:-0.184px;transform:scaleY(1.1);transform-origin:0 5.08px;left:470px;">Financing Fees</div>
<div class="t" style="top:284.64px;font-size:5.8px;color:#444;transform:scaleY(1.1);transform-origin:0 4.76px;right:22.40px;">$31.4</div>
<div class="t" style="top:296.82px;font-size:6.2px;color:#444;letter-spacing:-0.121px;transform:scaleY(1.1);transform-origin:0 5.08px;left:470px;">Cash to Balance Sheet</div>
<div class="t" style="top:297.14px;font-size:5.8px;color:#444;transform:scaleY(1.1);transform-origin:0 4.76px;right:22.40px;">$10.0</div>
<div class="t" style="top:321.01px;font-size:5.6px;color:#333;font-weight:bold;-webkit-text-stroke:0;left:470px;">Total Uses</div>
<div class="t" style="top:320.84px;font-size:5.8px;color:#333;font-weight:bold;-webkit-text-stroke:0;right:22.40px;">$2,335.7</div>
<div class="a" style="left:140.6px;top:337px;width:643px;height:80px;background:#fefefe;border:1px solid #e3e7e9;box-sizing:border-box;border-radius:2px"></div>
<div class="t" style="top:341.98px;font-size:8.2px;color:#2a2a2a;font-weight:bold;-webkit-text-stroke:0;letter-spacing:-0.32px;left:146.6px;">Summary Credit Statistics</div>
<div class="a" style="left:143.4px;top:351.4px;width:636.6px;height:70px;border:1px solid #e3e8eb;box-sizing:border-box;background:#fdfdfd"></div>
<div class="t" style="top:363.42px;font-size:5.1px;color:#555;font-weight:bold;-webkit-text-stroke:0;letter-spacing:0.098px;left:147px;">Credit Statistics</div>
<div class="t" style="top:364.05px;font-size:5.3px;color:#555;font-weight:bold;-webkit-text-stroke:0;letter-spacing:-0.071px;right:254.07px;">At Close</div>
<div class="t" style="top:372.05px;font-size:3.6px;color:#666;font-weight:bold;-webkit-text-stroke:0;letter-spacing:0.035px;right:253.97px;">Dec 31, 2024</div>
<div class="t" style="top:363.05px;font-size:5.3px;color:#555;font-weight:bold;-webkit-text-stroke:0;letter-spacing:0.008px;right:207.59px;">FY2025</div>
<div class="t" style="top:363.05px;font-size:5.3px;color:#555;font-weight:bold;-webkit-text-stroke:0;letter-spacing:0.008px;right:160.99px;">FY2026</div>
<div class="t" style="top:363.05px;font-size:5.3px;color:#555;font-weight:bold;-webkit-text-stroke:0;letter-spacing:0.008px;right:114.59px;">FY2027</div>
<div class="t" style="top:363.05px;font-size:5.3px;color:#555;font-weight:bold;-webkit-text-stroke:0;letter-spacing:0.008px;right:68.39px;">FY2028</div>
<div class="t" style="top:363.05px;font-size:5.3px;color:#555;font-weight:bold;-webkit-text-stroke:0;letter-spacing:0.008px;right:21.99px;">FY2029</div>
<div class="a" style="left:147px;top:377px;width:380px;height:0.6px;background:#efefef"></div>
<div class="t" style="top:382.76px;font-size:5.9px;color:#3a3a3a;letter-spacing:0.009px;transform:scaleY(1.1);transform-origin:0 4.84px;left:147px;text-decoration:underline;text-decoration-thickness:0.6px;text-underline-offset:0.2px;text-decoration-color:#555;">Ending Balances</div>
<div class="t" style="top:394.02px;font-size:6.2px;color:#333;letter-spacing:-0.118px;transform:scaleY(1.1);transform-origin:0 5.08px;left:147px;">Term Tranche</div>
<div class="t" style="top:394.94px;font-size:5.8px;color:#333;letter-spacing:-0.139px;transform:scaleY(1.1);transform-origin:0 4.76px;right:254.14px;">$1,255.8</div>
<div class="t" style="top:394.94px;font-size:5.8px;color:#333;letter-spacing:-0.239px;transform:scaleY(1.1);transform-origin:0 4.76px;right:207.84px;">$1,091.2</div>
<div class="t" style="top:394.94px;font-size:5.8px;color:#333;letter-spacing:-0.128px;transform:scaleY(1.1);transform-origin:0 4.76px;right:161.13px;">$932.3</div>
<div class="t" style="top:394.94px;font-size:5.8px;color:#333;letter-spacing:-0.068px;transform:scaleY(1.1);transform-origin:0 4.76px;right:114.67px;">$755.5</div>
<div class="t" style="top:394.94px;font-size:5.8px;color:#333;letter-spacing:-0.148px;transform:scaleY(1.1);transform-origin:0 4.76px;right:68.55px;">$562.1</div>
<div class="t" style="top:394.94px;font-size:5.8px;color:#333;transform:scaleY(1.1);transform-origin:0 4.76px;right:22.00px;">$350.5</div>
<div class="a" style="left:144.4px;top:403.1px;width:635px;height:4px;background:#dce9f1"></div>
<div class="a" style="left:724.6px;top:360px;width:14px;height:14px;border-radius:50%;background:#fff;box-shadow:0 1px 4px rgba(0,0,0,0.12)"></div>
<svg class="a" style="left:729px;top:364.5px" width="5" height="5" viewBox="0 0 5 5"><path d="M0.5 0.5 L4.5 4.5 M4.5 0.5 L0.5 4.5" stroke="#555" stroke-width="0.7"/></svg>
<div class="a" style="left:742px;top:360px;width:53px;height:14px;border-radius:7px;background:#fff;box-shadow:0 1px 4px rgba(0,0,0,0.12)"></div>
<div class="t" style="top:364.77px;font-size:5.4px;color:#444;letter-spacing:-0.172px;transform:scaleY(1.1);transform-origin:0 4.43px;left:668.41px;width:200px;text-align:center;">Hi. Need any help?</div>
<div class="a" style="left:770.4px;top:377.6px;width:23.2px;height:23.4px;background:#2a3d79"></div>
<svg class="a" style="left:776px;top:385px" width="12" height="10" viewBox="0 0 12 10"><rect x="0.5" y="0.8" width="11" height="6.2" rx="3.1" fill="#fff"/><path d="M7 6.5 L9 9 L9 6" fill="#fff"/></svg>
</body></html>
